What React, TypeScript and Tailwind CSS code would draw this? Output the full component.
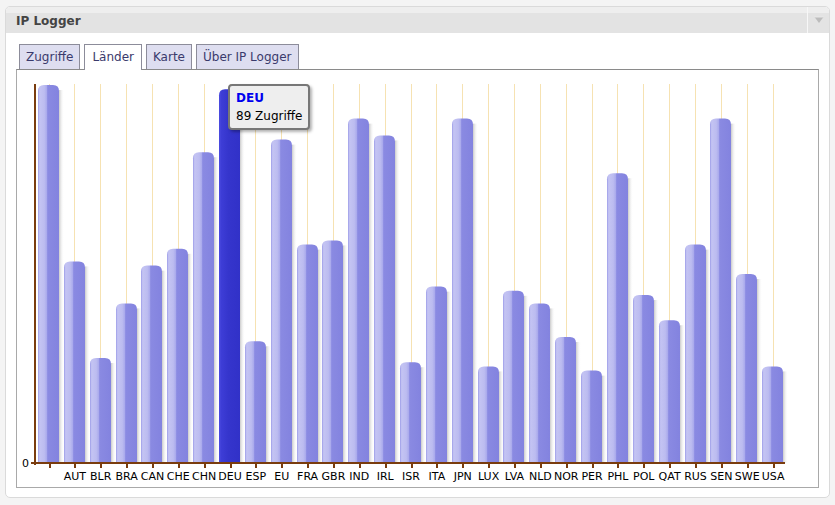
import React from 'react';

// Pixel tops read from the chart; axis sits at y=463, scale ~4.2px per hit
const countries: { code: string; hits: number }[] = [
  { code: '', hits: 90 },
  { code: 'AUT', hits: 48 },
  { code: 'BLR', hits: 25 },
  { code: 'BRA', hits: 38 },
  { code: 'CAN', hits: 47 },
  { code: 'CHE', hits: 51 },
  { code: 'CHN', hits: 74 },
  { code: 'DEU', hits: 89 },
  { code: 'ESP', hits: 29 },
  { code: 'EU', hits: 77 },
  { code: 'FRA', hits: 52 },
  { code: 'GBR', hits: 53 },
  { code: 'IND', hits: 82 },
  { code: 'IRL', hits: 78 },
  { code: 'ISR', hits: 24 },
  { code: 'ITA', hits: 42 },
  { code: 'JPN', hits: 82 },
  { code: 'LUX', hits: 23 },
  { code: 'LVA', hits: 41 },
  { code: 'NLD', hits: 38 },
  { code: 'NOR', hits: 30 },
  { code: 'PER', hits: 22 },
  { code: 'PHL', hits: 69 },
  { code: 'POL', hits: 40 },
  { code: 'QAT', hits: 34 },
  { code: 'RUS', hits: 52 },
  { code: 'SEN', hits: 82 },
  { code: 'SWE', hits: 45 },
  { code: 'USA', hits: 23 },
];

const AXIS_Y = 463;
const SCALE = 4.2;
const STEP = 25.86;
const BAR_W = 21;
const FIRST_X = 38;

function barPath(x: number, top: number) {
  const r = 6;
  return `M${x},${AXIS_Y} V${top + r} Q${x},${top} ${x + r},${top} H${x + BAR_W - r} Q${x + BAR_W},${top} ${x + BAR_W},${top + r} V${AXIS_Y} Z`;
}

function CountryChart() {
  return (
    <svg width={801} height={417} viewBox="17 70 801 417" className="block">
      <defs>
        <linearGradient id="bar" x1="0" x2="1" y1="0" y2="0">
          <stop offset="0" stopColor="#9c9ce8" />
          <stop offset="0.08" stopColor="#c4c4f3" />
          <stop offset="0.3" stopColor="#bcbcf0" />
          <stop offset="0.42" stopColor="#a9a9ec" />
          <stop offset="0.46" stopColor="#8a8ae2" />
          <stop offset="1" stopColor="#8383df" />
        </linearGradient>
        <linearGradient id="barActive" x1="0" x2="1" y1="0" y2="0">
          <stop offset="0" stopColor="#4c4ce0" />
          <stop offset="0.12" stopColor="#3d3dd6" />
          <stop offset="0.45" stopColor="#3535cc" />
          <stop offset="1" stopColor="#3131c8" />
        </linearGradient>
        <linearGradient id="shade" x1="0" x2="1" y1="0" y2="0">
          <stop offset="0" stopColor="#c4c4c4" stopOpacity="0.9" />
          <stop offset="1" stopColor="#ffffff" stopOpacity="0" />
        </linearGradient>
      </defs>

      {/* grid lines at the bar centres */}
      {countries.map((c, i) => {
        const cx = Math.round(FIRST_X + STEP * i + BAR_W / 2) + 0.5;
        return <line key={`g-${i}`} x1={cx} x2={cx} y1={84} y2={AXIS_Y} stroke="#f6e2b2" strokeWidth={1} />;
      })}

      {/* bars */}
      {countries.map((c, i) => {
        const x = Math.round(FIRST_X + STEP * i);
        const top = AXIS_Y - c.hits * SCALE;
        return (
          <g key={`b-${i}`}>
            <rect x={x + BAR_W} y={top + 5} width={5} height={AXIS_Y - top - 5} fill="url(#shade)" />
            <path d={barPath(x, top)} fill={c.code === 'DEU' ? 'url(#barActive)' : 'url(#bar)'} />
          </g>
        );
      })}

      {/* axes */}
      <rect x={34} y={84} width={2} height={381} fill="#7a3c0e" />
      <rect x={31} y={462} width={754} height={2} fill="#7a3c0e" />
      {countries.map((c, i) => {
        const cx = Math.round(FIRST_X + STEP * i + BAR_W / 2);
        return <rect key={`t-${i}`} x={cx} y={464} width={2} height={4} fill="#7a3c0e" />;
      })}
      <text x={29} y={467} textAnchor="end" fontSize={11} fontFamily="'DejaVu Sans', Verdana, sans-serif" fill="#000">
        0
      </text>
      {countries.map((c, i) => {
        const cx = FIRST_X + STEP * i + BAR_W / 2 + 0.5;
        return (
          <text
            key={`l-${i}`}
            x={cx}
            y={480}
            textAnchor="middle"
            fontSize={11}
            fontFamily="'DejaVu Sans', Verdana, sans-serif"
            fill="#000"
          >
            {c.code}
          </text>
        );
      })}
    </svg>
  );
}

const tabs = ['Zugriffe', 'Länder', 'Karte', 'Über IP Logger'];

export default function App() {
  return (
    <div className="w-[835px] h-[505px] bg-[#f4f4f4] pt-[6px] pl-[5px] font-['DejaVu_Sans',Verdana,sans-serif]">
      <div className="w-[825px] h-[492px] bg-white border border-[#dadada] rounded-[5px] flex flex-col overflow-hidden">
        {/* Header */}
        <div className="h-[26px] flex items-stretch bg-[linear-gradient(#eeeeee_0,#eeeeee_6px,#e3e3e3_6px)]">
          <div className="flex-1 flex items-center pl-[10px] pt-[1px] text-[12px] font-bold text-[#444]">IP Logger</div>
          <div className="w-[22px] border-l border-[#f7f7f7] flex items-center justify-center">
            <svg width="10" height="8" viewBox="0 0 10 8">
              <path d="M0.5,1 H9.5 L5,7 Z" fill="#bcbcbc" />
              <path d="M0.5,1 H9.5" stroke="#e8e8e8" strokeWidth="1" />
            </svg>
          </div>
        </div>

        {/* Body */}
        <div className="flex-1 flex flex-col pt-[11px] pl-[10px] pr-[10px] pb-[9px]">
          <div className="flex gap-[4px] ml-[3px]">
            {tabs.map((t) =>
              t === 'Länder' ? (
                <div
                  key={t}
                  className="relative z-10 h-[26px] -mb-px px-[7px] pb-[1px] flex items-center bg-white border border-b-0 border-[#8c8c9a] text-[12px] text-[#3a3a6c]"
                >
                  {t}
                </div>
              ) : (
                <div
                  key={t}
                  className="h-[25px] px-[6px] flex items-center bg-[#dedef0] border border-b-0 border-[#8c8c9a] text-[12px] text-[#3a3a6c]"
                >
                  {t}
                </div>
              )
            )}
          </div>
          <div className="relative w-[803px] h-[419px] border border-[#a9a9a9] border-t-[#8a8a8a]">
            <CountryChart />
            <div className="absolute left-[211px] top-[14px] w-[82px] h-[46px] bg-[#eeeeee] border-2 border-[#777] rounded-[4px] shadow-[2px_2px_3px_rgba(0,0,0,0.3)] pl-[6px] pt-[3px] text-[12px] leading-[18px]">
              <div className="font-bold text-[#0000ee]">DEU</div>
              <div className="text-black">89 Zugriffe</div>
            </div>
          </div>
        </div>
      </div>
    </div>
  );
}
